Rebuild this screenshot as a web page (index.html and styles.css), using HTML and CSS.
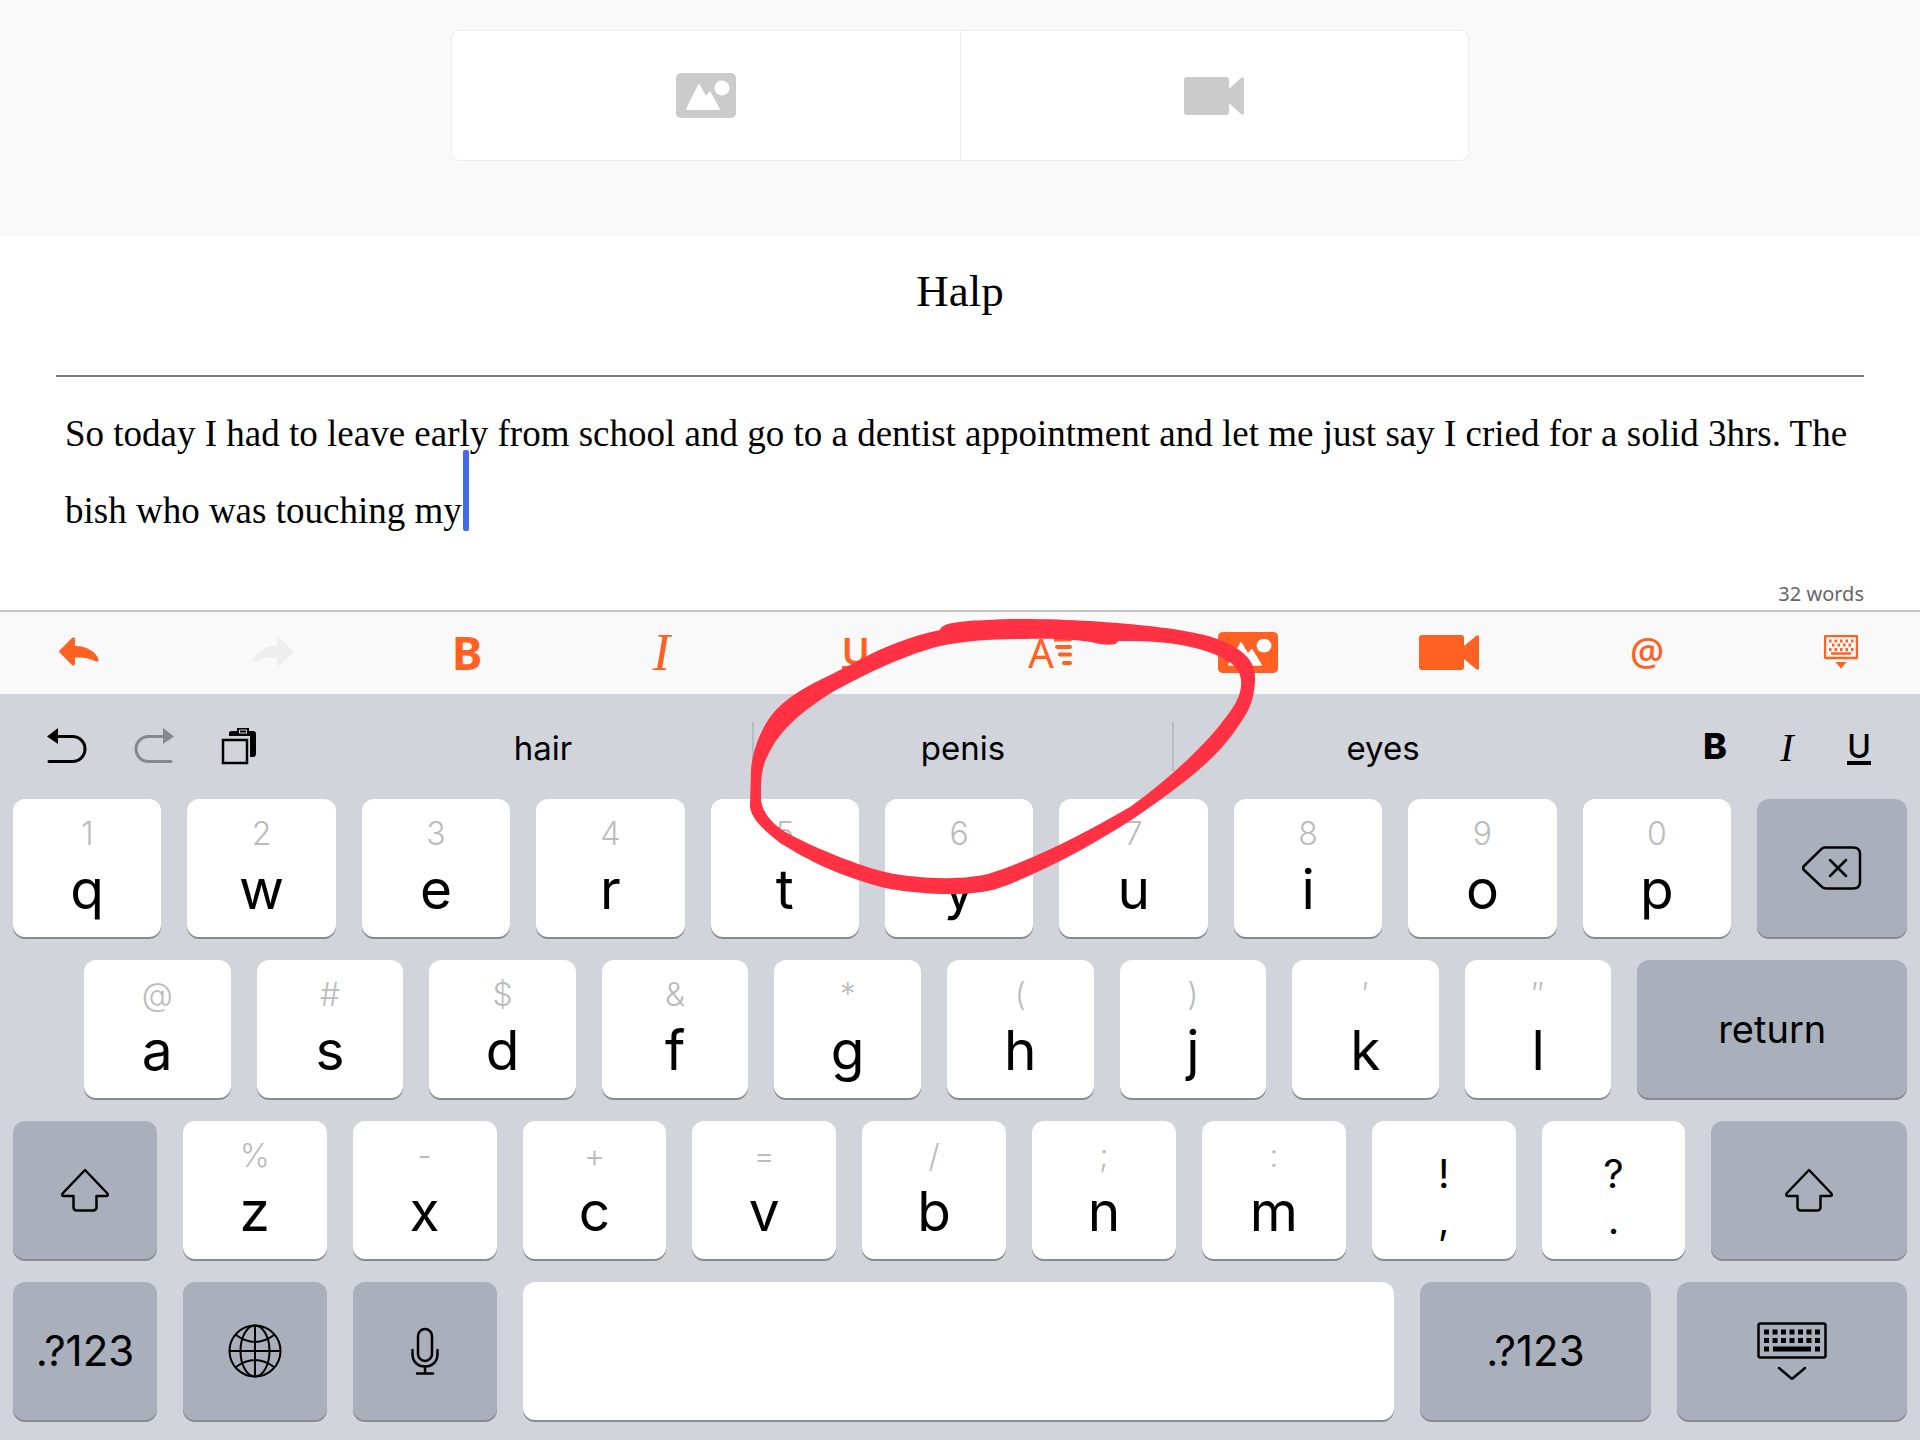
FILE: index.html
```html
<!DOCTYPE html>
<html lang="en">

<head>
    <meta charset="UTF-8">
    <meta name="viewport" content="width=device-width, initial-scale=1.0">
    <title>Halp</title>
    <link rel="stylesheet" href="styles.css">
</head>

<body>
    <header class="media-header">
        <div class="media-card">
            <button type="button" aria-label="Add image">
                <svg width="60" height="45" viewBox="0 0 60 45">
                    <rect width="60" height="45" rx="5" fill="#cbcbcb" />
                    <path d="M10 36 L22 12 Q23 10 24 12 L30 23 L33 19 Q34 18 35 20 L44 36 Q44 37 43 37 L11 37 Q10 37 10 36Z" fill="#fff" />
                    <circle cx="46" cy="15" r="7.5" fill="#fff" />
                </svg>
            </button>
            <button type="button" aria-label="Add video">
                <svg width="60" height="38" viewBox="0 0 60 38">
                    <path d="M3 0H42Q45 0 45 3V12L57 1Q60 -1 60 2V36Q60 39 57 37L45 26V35Q45 38 42 38H3Q0 38 0 35V3Q0 0 3 0Z" fill="#cbcbcb" />
                </svg>
            </button>
        </div>
    </header>

    <main class="editor">
        <input type="text" class="story-title" aria-label="Title" value="Halp">
        <div class="story">
            <textarea class="story-text" aria-label="Story" rows="2" spellcheck="false">So today I had to leave early from school and go to a dentist appointment and let me just say I cried for a solid 3hrs. The bish who was touching my</textarea>
            <span class="caret"></span>
        </div>
        <p class="word-count">32 words</p>
    </main>

    <div class="toolbar">
        <button type="button" aria-label="Undo">
            <svg width="40" height="30" viewBox="0 0 40 30">
                <path d="M1 13L13 1Q16 -1 16 3V9C28 9 37 15 39.500 22Q40 26 36 24C30 21 24 20 16 20.500V26Q16 30 13 28L1 16Q-.5 14.500 1 13Z" fill="#ff6122" />
            </svg>
        </button>
        <button type="button" aria-label="Redo" disabled>
            <svg width="40" height="30" viewBox="0 0 40 30">
                <path d="M39 13L27 1Q24 -1 24 3V9C12 9 3 15 .5 22Q0 26 4 24C10 21 16 20 24 20.500V26Q24 30 27 28L39 16Q40.500 14.500 39 13Z" fill="#eee" />
            </svg>
        </button>
        <button type="button" class="bold">B</button>
        <button type="button" class="italic">I</button>
        <button type="button" class="underline"><span>U</span></button>
        <button type="button" class="align" aria-label="Alignment">
            <span>A</span>
            <svg width="18" height="30" viewBox="0 0 18 30">
                <path d="M0 2.500H16M3 10H16M6 17.500H16M10 26H16" stroke="#ff6122" stroke-width="4" stroke-linecap="round" />
            </svg>
        </button>
        <button type="button" aria-label="Insert image">
            <svg width="60" height="41" viewBox="0 0 60 45" preserveAspectRatio="none">
                <rect width="60" height="45" rx="5" fill="#ff6122" />
                <path d="M10 36 L22 12 Q23 10 24 12 L30 23 L33 19 Q34 18 35 20 L44 36 Q44 37 43 37 L11 37 Q10 37 10 36Z" fill="#fff" />
                <circle cx="46" cy="15" r="7.5" fill="#fff" />
            </svg>
        </button>
        <button type="button" aria-label="Insert video">
            <svg width="60" height="35" viewBox="0 0 60 38" preserveAspectRatio="none">
                <path d="M3 0H42Q45 0 45 3V12L57 1Q60 -1 60 2V36Q60 39 57 37L45 26V35Q45 38 42 38H3Q0 38 0 35V3Q0 0 3 0Z" fill="#ff6122" />
            </svg>
        </button>
        <button type="button" class="mention">@</button>
        <button type="button" aria-label="Close editor keyboard">
            <svg width="34" height="34" viewBox="0 0 34 34">
                <rect x="1" y="1" width="32" height="22" rx="1" fill="none" stroke="#ff6122" stroke-width="2.500" />
                <path d="M5 6H30M5 14.500H30" stroke="#ff6122" stroke-width="3" stroke-dasharray="2.500 3" />
                <path d="M8 10H28" stroke="#ff6122" stroke-width="3" stroke-dasharray="2.500 3" />
                <path d="M8 18.500H26" stroke="#ff6122" stroke-width="2.500" stroke-linecap="round" />
                <path d="M11.500 27H22.500L17 33.500Z" fill="#ff6122" />
            </svg>
        </button>
    </div>

    <section class="keyboard">
        <div class="suggestion-bar">
            <div class="shortcuts">
                <button type="button" aria-label="Undo typing">
                    <svg width="40" height="38" viewBox="0 0 40 38">
                        <path d="M8 9.500H25.500A12.500 12.500 0 0 1 25.500 34.500H2" fill="none" stroke="#000" stroke-width="3" stroke-linecap="round" />
                        <path d="M0 9.500L11 1V17Z" />
                    </svg>
                </button>
                <button type="button" aria-label="Redo typing" disabled>
                    <svg width="40" height="38" viewBox="0 0 40 38">
                        <path d="M32 9.500H14.500A12.500 12.500 0 0 0 14.500 34.500H37" fill="none" stroke="#85888d" stroke-width="3" stroke-linecap="round" />
                        <path d="M40 9.500L29 1V17Z" fill="#85888d" />
                    </svg>
                </button>
                <button type="button" aria-label="Paste">
                    <svg width="36" height="38" viewBox="0 0 36 38">
                        <path d="M8 9V6Q8 4 11 4H16V1H28V4H32Q35 4 35 7V27Q35 30 32 30H29V9Z" />
                        <rect x="18.500" y="3" width="7" height="3" fill="none" stroke="#d1d4da" />
                        <rect x="2" y="13" width="24" height="23" fill="#d1d4da" stroke="#000" stroke-width="2.500" />
                    </svg>
                </button>
            </div>
            <div class="suggestions">
                <button type="button">hair</button>
                <button type="button">penis</button>
                <button type="button">eyes</button>
            </div>
            <div class="formats">
                <button type="button" class="bold">B</button>
                <button type="button" class="italic">I</button>
                <button type="button" class="underline"><span>U</span></button>
            </div>
        </div>

        <div class="row">
            <button type="button" class="key"><small>1</small>q</button>
            <button type="button" class="key"><small>2</small>w</button>
            <button type="button" class="key"><small>3</small>e</button>
            <button type="button" class="key"><small>4</small>r</button>
            <button type="button" class="key"><small>5</small>t</button>
            <button type="button" class="key"><small>6</small>y</button>
            <button type="button" class="key"><small>7</small>u</button>
            <button type="button" class="key"><small>8</small>i</button>
            <button type="button" class="key"><small>9</small>o</button>
            <button type="button" class="key"><small>0</small>p</button>
            <button type="button" class="key dark backspace" aria-label="Backspace">
                <svg width="60" height="44" viewBox="0 0 60 44">
                    <path d="M22 1.500H51Q58 1.500 58 8V36Q58 42.500 51 42.500H24Q21 42.500 19 40L2 24Q0 22 2 20L19 3.500Q20.500 1.500 22 1.500Z" fill="none" stroke="#000" stroke-width="2.500" />
                    <path d="M28 14L44 30M44 14L28 30" stroke="#000" stroke-width="2.500" stroke-linecap="round" />
                </svg>
            </button>
        </div>

        <div class="row row-home">
            <button type="button" class="key"><small>@</small>a</button>
            <button type="button" class="key"><small>#</small>s</button>
            <button type="button" class="key"><small>$</small>d</button>
            <button type="button" class="key"><small>&amp;</small>f</button>
            <button type="button" class="key"><small>*</small>g</button>
            <button type="button" class="key"><small>(</small>h</button>
            <button type="button" class="key"><small>)</small>j</button>
            <button type="button" class="key"><small>′</small>k</button>
            <button type="button" class="key"><small>″</small>l</button>
            <button type="button" class="key dark return">return</button>
        </div>

        <div class="row">
            <button type="button" class="key dark" aria-label="Shift">
                <svg width="50" height="44" viewBox="0 0 50 44">
                    <path d="M25 2L47 25Q49 28 46 28H36.500V39Q36.500 42.500 33 42.500H17Q13.500 42.500 13.500 39V28H4Q1 28 3 25Z" fill="none" stroke="#000" stroke-width="2.500" stroke-linejoin="round" />
                </svg>
            </button>
            <button type="button" class="key"><small>%</small>z</button>
            <button type="button" class="key"><small>-</small>x</button>
            <button type="button" class="key"><small>+</small>c</button>
            <button type="button" class="key"><small>=</small>v</button>
            <button type="button" class="key"><small>/</small>b</button>
            <button type="button" class="key"><small>;</small>n</button>
            <button type="button" class="key"><small>:</small>m</button>
            <button type="button" class="key mark"><span>!</span><span>,</span></button>
            <button type="button" class="key mark"><span>?</span><span>.</span></button>
            <button type="button" class="key dark shift-right" aria-label="Right shift">
                <svg width="50" height="44" viewBox="0 0 50 44">
                    <path d="M25 2L47 25Q49 28 46 28H36.500V39Q36.500 42.500 33 42.500H17Q13.500 42.500 13.500 39V28H4Q1 28 3 25Z" fill="none" stroke="#000" stroke-width="2.500" stroke-linejoin="round" />
                </svg>
            </button>
        </div>

        <div class="row">
            <button type="button" class="key dark symbols">.?123</button>
            <button type="button" class="key dark" aria-label="Next keyboard">
                <svg width="54" height="54" viewBox="0 0 54 54" fill="none" stroke="#000" stroke-width="2">
                    <circle cx="27" cy="27" r="25.500" />
                    <ellipse cx="27" cy="27" rx="14.500" ry="25.500" />
                    <path d="M27 1V53M1 27H53M8 11Q27 25 46 11M8 43Q27 29 46 43" />
                </svg>
            </button>
            <button type="button" class="key dark" aria-label="Dictate">
                <svg width="28" height="48" viewBox="0 0 28 48" fill="none" stroke="#000" stroke-width="2.500" stroke-linecap="round">
                    <rect x="7" y="2" width="14" height="32" rx="7" />
                    <path d="M1.500 23V27C1.500 35 7 39.500 14 39.500S26.500 35 26.500 27V23M14 40V46M6 46.500H22" />
                </svg>
            </button>
            <button type="button" class="key space" aria-label="Space"></button>
            <button type="button" class="key dark symbols wide">.?123</button>
            <button type="button" class="key dark wide" aria-label="Hide keyboard">
                <svg width="70" height="58" viewBox="0 0 70 58">
                    <rect x="1.500" y="1.500" width="67" height="34" rx="2" fill="none" stroke="#000" stroke-width="2.500" />
                    <path d="M7 10H63M7 18.500H63" stroke="#000" stroke-width="5" stroke-dasharray="5 3.500" />
                    <path d="M7 27H12M16 27H54M58 27H63" stroke="#000" stroke-width="5" />
                    <path d="M22 46L35 57L48 46" fill="none" stroke="#000" stroke-width="2.500" stroke-linecap="round" />
                </svg>
            </button>
        </div>
    </section>

    <!-- hand drawn circle over the middle suggestion -->
    <svg class="scribble" width="530" height="300" viewBox="740 610 530 300" aria-hidden="true">
        <path fill="#ff3143" fill-rule="evenodd" d="M940 630C942 622 965 621 987 620C1010 618 1060 619 1090 621C1130 624 1190 628 1220 640C1245 650 1256 662 1255 680C1254 705 1246 715 1235 731C1216 758 1190 778 1160 800C1120 830 1050 870 999 888C975 896 930 896 885 888C840 876 810 862 779 842C758 826 750 815 750 805L751 770C753 745 765 720 779 707C800 686 840 672 869 655C895 642 920 634 940 630Z
            M1118 641C1117 646 1105 645 1095 643C1085 640 1050 638 1024 639C985 639 950 642 926 650C895 660 870 672 836 690C800 712 780 730 768 755C760 770 761 785 761 800C763 815 775 827 791 835C815 848 860 866 885 872C920 880 970 880 991 873C1040 857 1090 830 1130 807C1165 782 1200 750 1220 725C1236 705 1242 695 1241 680C1240 665 1224 655 1191 647C1165 641 1140 641 1118 641Z" />
    </svg>
</body>

</html>
```
FILE: styles.css
```css
* {
    box-sizing: border-box;
}

body {
    position: relative;
    margin: 0;
    background-color: #fff;
    color: #000;
    font-family: Inter, "Liberation Sans", sans-serif;
}

button {
    padding: 0;
    border: none;
    background: none;
    color: inherit;
    font-family: inherit;
    cursor: pointer;
}

svg {
    display: block;
}

/* media picker */
.media-header {
    height: 236px;
    padding-top: 30px;
    background-color: #f9f9f9;
}

.media-card {
    display: flex;
    width: 53%;
    height: 131px;
    margin: 0 auto;
    border: 1px solid #ededed;
    border-radius: 8px;
    background-color: #fff;
}

.media-card button {
    display: flex;
    flex: 1;
    justify-content: center;
    align-items: center;
}

.media-card button + button {
    border-left: 1px solid #ededed;
}

/* editor */
.editor {
    height: 374px;
    padding: 0 56px;
}

.story-title {
    display: block;
    width: 100%;
    height: 141px;
    padding: 0 0 30px;
    border: none;
    border-bottom: 2px solid #77787a;
    outline: none;
    font-family: "Liberation Serif", serif;
    font-size: 45px;
    text-align: center;
}

.story {
    position: relative;
    padding: 18px 0 0 9px;
}

.story-text {
    display: block;
    width: 100%;
    height: 156px;
    padding: 0;
    border: none;
    outline: none;
    background: none;
    resize: none;
    overflow: hidden;
    font-family: "Liberation Serif", serif;
    font-size: 37px;
    line-height: 77px;
}

.caret {
    position: absolute;
    top: 73px;
    left: 407px;
    width: 6px;
    height: 81px;
    border-radius: 2px;
    background-color: #426aec;
}

.word-count {
    margin: 28px 0 0;
    color: #666;
    font-family: "Noto Sans", sans-serif;
    font-size: 20px;
    line-height: 30px;
    text-align: right;
}

/* editor toolbar */
.toolbar {
    display: flex;
    justify-content: space-between;
    align-items: center;
    height: 84px;
    padding: 0 52px 2px;
    border-top: 2px solid #c2c3c4;
    background-color: #f9f9f9;
    color: #ff6122;
    font-family: "Noto Sans", sans-serif;
}

.toolbar button {
    display: flex;
    justify-content: center;
    align-items: center;
    min-width: 53px;
    height: 60px;
}

.bold {
    font-weight: 700;
}

.italic {
    font-family: "Liberation Serif", serif;
    font-style: italic;
}

.underline span {
    border-bottom: 4px solid currentColor;
    line-height: 32px;
}

.toolbar .bold {
    font-size: 46px;
}

.toolbar .italic {
    font-size: 52px;
}

.toolbar .underline {
    font-size: 38px;
    font-weight: 600;
}

.toolbar .align {
    font-size: 40px;
}

.toolbar .mention {
    padding-bottom: 4px;
    font-size: 38px;
    font-weight: 500;
}

/* keyboard */
.keyboard {
    display: flex;
    flex-direction: column;
    gap: 23px;
    padding: 0 13px 20px;
    background-color: #d1d4da;
}

.suggestion-bar {
    display: flex;
    align-items: center;
    height: 82px;
    padding-top: 22px;
}

.shortcuts,
.formats {
    display: flex;
    flex: 1;
    gap: 47px;
    padding-left: 34px;
}

.formats {
    justify-content: flex-end;
    gap: 32px;
    padding: 0 28px 0 0;
}

.formats button {
    width: 40px;
    height: 44px;
    font-size: 36px;
}

.formats .bold {
    font-weight: 800;
}

.formats .italic {
    font-size: 40px;
}

.formats .underline {
    font-size: 32px;
    font-weight: 500;
}

.formats .underline span {
    display: inline-block;
    line-height: 28px;
}

.suggestions {
    display: flex;
    flex: 0 0 1258px;
}

.suggestions button {
    flex: 1;
    height: 49px;
    padding-top: 4px;
    font-size: 33px;
}

.suggestions button + button {
    border-left: 2px solid #b9bcc2;
}

.row {
    display: flex;
    gap: 26px;
}

.row-home {
    padding-left: 71px;
}

.key {
    display: flex;
    flex: 1 1 0;
    flex-direction: column;
    align-items: center;
    min-width: 0;
    height: 138px;
    padding-top: 14px;
    border-radius: 12px;
    background-color: #fff;
    box-shadow: 0 2px 0 #888a8e;
    font-size: 55px;
    line-height: 68px;
}

.key small {
    color: #bbb;
    font-size: 32px;
    font-weight: 300;
    line-height: 42px;
}

.key.dark {
    justify-content: center;
    padding-top: 0;
    background-color: #aab0bb;
    font-size: 38px;
}

.key.symbols {
    font-size: 42px;
}

.key.mark {
    padding-top: 30px;
    font-size: 40px;
    line-height: 46px;
}

.key.backspace {
    flex-grow: 1.01;
}

.key.return {
    flex-grow: 1.84;
}

.key.shift-right {
    flex-grow: 1.36;
}

.key.space {
    flex-grow: 6.05;
}

.key.wide {
    flex-grow: 1.6;
}

.scribble {
    position: absolute;
    top: 610px;
    left: 740px;
    pointer-events: none;
}
```
